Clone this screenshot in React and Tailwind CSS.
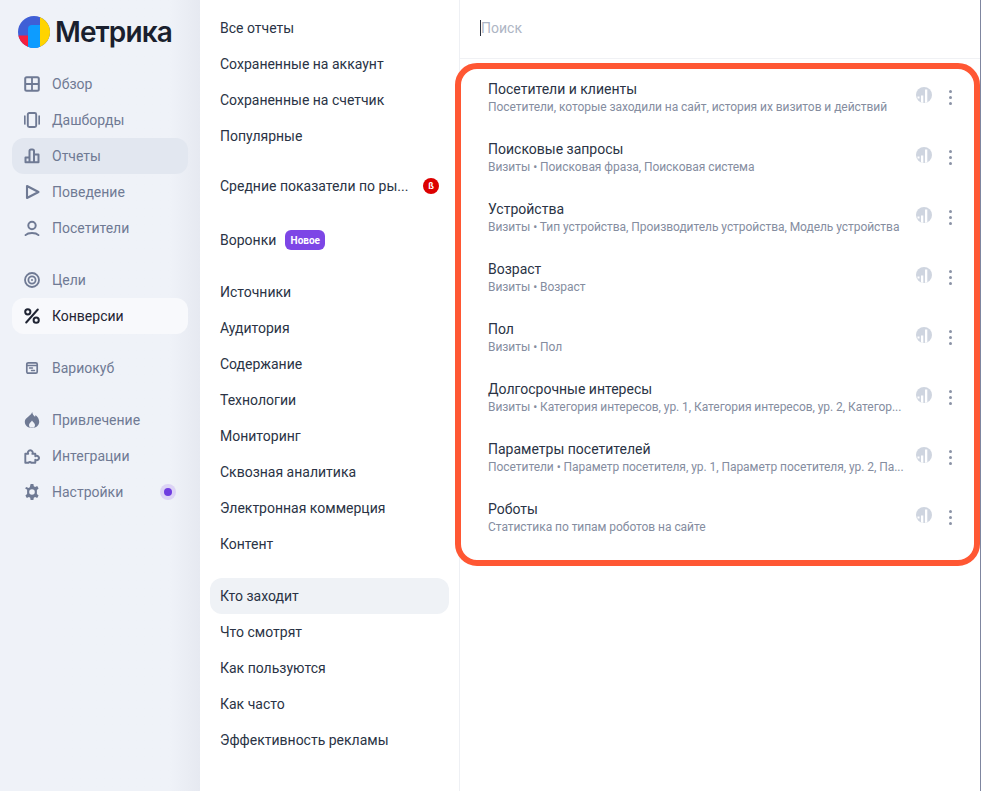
const nav1 = [
  ["Обзор", "grid"],
  ["Дашборды", "dash"],
  ["Отчеты", "bars", "active"],
  ["Поведение", "play"],
  ["Посетители", "user"],
];

function NavIcon({ name, dark }) {
  const c = dark ? "#1f2433" : "#6f7a94";
  const p = { fill: "none", stroke: c, strokeWidth: 2, strokeLinecap: "round", strokeLinejoin: "round" };
  const s = { width: 16, height: 16, viewBox: "0 0 16 16" };
  if (name === "grid") return <svg {...s}><rect x="1.2" y="1.2" width="13.6" height="13.6" rx="1.5" {...p} strokeWidth="2" /><path d="M8 2v12M2 8h12" {...p} strokeWidth="1.8" /></svg>;
  if (name === "dash") return <svg {...s}><rect x="3.8" y="1" width="8.4" height="14" rx="1.5" {...p} strokeWidth="1.9" /><path d="M0.8 4v8M15.2 4v8" {...p} strokeWidth="1.7" /></svg>;
  if (name === "bars") return <svg {...s}><path d="M1.500 14.200V9.500h4v4.700zM5.500 14.200V3A1.500 1.500 0 0 1 7 1.500h1.500A1.500 1.500 0 0 1 10 3v11.200M10 14.200V6.500h4.500v7.700zM1.500 14.200h13" {...p} strokeWidth="2" /></svg>;
  if (name === "play") return <svg {...s}><path d="M3 2v12L14.500 8z" {...p} strokeWidth="2.1" /></svg>;
  if (name === "user") return <svg {...s}><circle cx="8" cy="5.500" r="3.700" {...p} strokeWidth="2" /><path d="M1.500 15.200c1.500-1.600 3.600-2.200 6.500-2.200s5 .6 6.500 2.200" {...p} strokeWidth="1.800" /></svg>;
  if (name === "target") return <svg {...s}><circle cx="8" cy="8" r="7" {...p} strokeWidth="1.800" /><circle cx="8" cy="8" r="3.600" {...p} strokeWidth="1.800" /><circle cx="8" cy="8" r="1" fill={c} /></svg>;
  if (name === "percent") return <svg {...s}><circle cx="3.800" cy="3.800" r="2.600" {...p} strokeWidth="2" /><circle cx="12.200" cy="12.200" r="2.600" {...p} strokeWidth="2" /><path d="M13.800 1.500 2.200 14.500" {...p} strokeWidth="2" /></svg>;
  if (name === "cube") return <svg {...s}><rect x="2.800" y="2.800" width="10.400" height="10.400" rx="1.400" {...p} strokeWidth="1.700" /><path d="M3 5.600h10" {...p} strokeWidth="1.500" /><path d="M5.500 8h3M7.500 10.500h3" {...p} strokeWidth="1.400" /></svg>;
  if (name === "fire") return <svg {...s}><path fillRule="evenodd" d="M8.200 0c.3 2.200 1.300 3.400 2.800 4.800.3-.6.5-1.200.5-1.900C13.800 4.600 15.200 7.100 15.200 9.800c0 3.600-3 6.200-7.200 6.200S.8 13.400.8 9.800C.8 5.600 6.800 4.200 8.200 0zM8 8.500c-.5 1.500-3 2.400-3 4.600 0 1.300.8 2.200 1.700 2.500h2.600c.9-.3 1.700-1.200 1.700-2.500C11 10.900 8.500 10 8 8.500z" fill={c} /></svg>;
  if (name === "puzzle") return <svg {...s}><path d="M1.300 14.800V5.800h2.900a2.400 2.400 0 1 1 4.200 0h2.900v2.500a2.200 2.200 0 1 1 0 3.400v3.100H7.400a1.900 1.900 0 0 0-3 0z" {...p} strokeWidth="1.900" /></svg>;
  if (name === "gear") return <svg {...s}><path fillRule="evenodd" d="M6.600 0h2.800l.4 2.200 1.300.7 2.100-.8 1.400 2.400-1.700 1.400v4.200l1.700 1.400-1.400 2.400-2.100-.8-1.300.7L9.400 16H6.600l-.4-2.200-1.300-.7-2.100.8-1.400-2.400 1.700-1.400V5.700L1 4.300l1.400-1.200 2.100.8 1.300-.7zM8 5.200a2.800 2.800 0 1 0 0 5.600 2.800 2.800 0 0 0 0-5.600z" fill={c} /></svg>;
  return null;
}

function NavItem({ label, icon, variant, dot }) {
  const bg = variant === "active" ? "bg-[#e2e7f0]" : variant === "white" ? "bg-[#f8f9fc]" : "";
  const tc = variant === "white" ? "text-[#1f2433]" : "text-[#6f7a94]";
  return (
    <div className={`flex h-9 items-center rounded-xl pl-[12px] pr-[12px] ${bg}`}>
      <span className="flex h-4 w-4 shrink-0 items-center justify-center"><NavIcon name={icon} dark={variant === "white"} /></span>
      <span className={`ml-3 text-[14px] ${tc}`}>{label}</span>
      {dot && (
        <span className="ml-auto flex h-4 w-4 items-center justify-center rounded-full bg-[#dcd3f5]">
          <span className="h-2 w-2 rounded-full bg-[#6f3de0]" />
        </span>
      )}
    </div>
  );
}

function Logo() {
  return (
    <svg width="32" height="32" viewBox="0 0 32 32">
      <defs><clipPath id="lc"><circle cx="16" cy="16" r="16" /></clipPath></defs>
      <g clipPath="url(#lc)">
        <rect width="32" height="32" fill="#3f5fd6" />
        <rect x="0" y="19.500" width="11" height="13" fill="#f5203f" />
        <rect x="22" y="0" width="10" height="32" fill="#ffd400" />
        <path d="M10 32V13a4 4 0 0 1 4-4h8V32z" fill="#0d9cff" />
      </g>
    </svg>
  );
}

const midA = ["Все отчеты", "Сохраненные на аккаунт", "Сохраненные на счетчик", "Популярные"];
const midB = ["Источники", "Аудитория", "Содержание", "Технологии", "Мониторинг", "Сквозная аналитика", "Электронная коммерция", "Контент"];
const midC = ["Кто заходит", "Что смотрят", "Как пользуются", "Как часто", "Эффективность рекламы"];

function MidItem({ children, active }) {
  return (
    <div className={`flex h-9 items-center rounded-xl px-[10px] text-[14px] text-[#2a3345] ${active ? "bg-[#eff2f6]" : ""}`}>
      {children}
    </div>
  );
}

const rows = [
  ["Посетители и клиенты", "Посетители, которые заходили на сайт, история их визитов и действий"],
  ["Поисковые запросы", "Визиты • Поисковая фраза, Поисковая система"],
  ["Устройства", "Визиты • Тип устройства, Производитель устройства, Модель устройства"],
  ["Возраст", "Визиты • Возраст"],
  ["Пол", "Визиты • Пол"],
  ["Долгосрочные интересы", "Визиты • Категория интересов, ур. 1, Категория интересов, ур. 2, Категор..."],
  ["Параметры посетителей", "Посетители • Параметр посетителя, ур. 1, Параметр посетителя, ур. 2, Па..."],
  ["Роботы", "Статистика по типам роботов на сайте"],
];

function ReportIcon() {
  return (
    <svg width="16" height="16" viewBox="0 0 16 16">
      <defs><clipPath id="rc"><circle cx="8" cy="8" r="8" /></clipPath></defs>
      <circle cx="8" cy="8" r="8" fill="#cfd5e0" />
      <g clipPath="url(#rc)">
        <path d="M9 2.500h2.300V16H9zM5 8.500h2.300V16H5zM1.500 9.500h2v2h-2z" fill="#fff" />
      </g>
    </svg>
  );
}

export default function App() {
  return (
    <div className="relative flex h-[791px] w-[981px] overflow-hidden bg-white font-['Roboto','Noto_Sans',sans-serif]">
      <aside className="flex w-[200px] shrink-0 flex-col bg-gradient-to-r from-[#eff2f8] from-[85%] to-[#e6e9f1] px-3">
        <div className="flex h-[66px] items-center pl-[6px] pb-[2px]">
          <Logo />
          <span className="ml-[5px] text-[28px] font-semibold leading-none tracking-[-0.9px] text-[#1a1f2e] font-['Inter',sans-serif]">Метрика</span>
        </div>
        {nav1.map(([l, i, v]) => <NavItem key={l} label={l} icon={i} variant={v} />)}
        <div className="h-4" />
        <NavItem label="Цели" icon="target" />
        <NavItem label="Конверсии" icon="percent" variant="white" />
        <div className="h-4" />
        <NavItem label="Вариокуб" icon="cube" />
        <div className="h-4" />
        <NavItem label="Привлечение" icon="fire" />
        <NavItem label="Интеграции" icon="puzzle" />
        <NavItem label="Настройки" icon="gear" dot />
      </aside>

      <nav className="flex w-[260px] shrink-0 flex-col border-r border-[#eef0f4] pl-[10px] pr-[10px] pt-[10px]">
        {midA.map((t) => <MidItem key={t}>{t}</MidItem>)}
        <div className="mt-[14px]">
          <MidItem>
            <span>Средние показатели по ры...</span>
            <span className="ml-auto flex h-4 w-4 items-center justify-center rounded-full bg-[#dc0000] text-[9px] font-bold leading-none text-white">ß</span>
          </MidItem>
        </div>
        <div className="mt-[18px]">
          <MidItem>
            <span>Воронки</span>
            <span className="ml-[9px] flex h-5 w-10 items-center justify-center rounded-md bg-[#7d46e6] text-[10px] font-bold text-white">Новое</span>
          </MidItem>
        </div>
        <div className="mt-4">
          {midB.map((t) => <MidItem key={t}>{t}</MidItem>)}
        </div>
        <div className="mt-4">
          {midC.map((t, i) => <MidItem key={t} active={i === 0}>{t}</MidItem>)}
        </div>
      </nav>

      <main className="flex min-w-0 flex-1 flex-col border-r border-[#7f86a0]">
        <div className="flex h-[59px] items-center border-b border-[#f0f1f4] pl-5 pb-[2px]">
          <span className="h-[16px] w-px bg-[#2a3040]" />
          <span className="text-[14px] text-[#aeb5c4]">Поиск</span>
        </div>
        <div>
          {rows.map(([t, s]) => (
            <div key={t} className="flex h-[60px] items-start pl-[28px] pr-[28px] pt-[20px]">
              <div className="min-w-0 flex-1">
                <div className="text-[14px] leading-[20px] text-[#2a3345]">{t}</div>
                <div className="mt-[1px] whitespace-nowrap text-[12px] leading-[15px] tracking-[-0.05px] text-[#858d9f]">{s}</div>
              </div>
              <div className="ml-2 mt-[8px] flex items-start gap-[17px]">
                <ReportIcon />
                <span className="mt-[3px] flex flex-col gap-[3px]">
                  <span className="h-[3px] w-[3px] rounded-full bg-[#8b93a6]" />
                  <span className="h-[3px] w-[3px] rounded-full bg-[#8b93a6]" />
                  <span className="h-[3px] w-[3px] rounded-full bg-[#8b93a6]" />
                </span>
              </div>
            </div>
          ))}
        </div>
      </main>

      <div className="pointer-events-none absolute left-[455px] top-[63px] h-[503px] w-[525px] rounded-[22px] border-[6px] border-[#ff5733]" />
    </div>
  );
}
